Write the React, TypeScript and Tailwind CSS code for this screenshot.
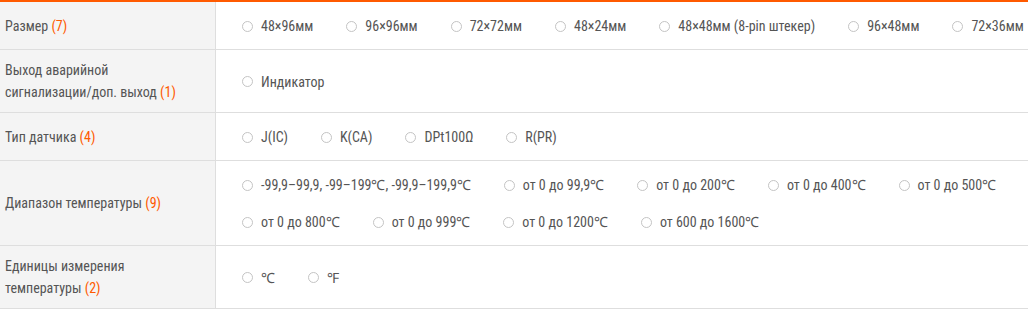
import { useState } from "react";
import type { ReactNode } from "react";

type Row = {
  label: ReactNode;
  count: number;
  options: string[];
};

const rows: Row[] = [
  {
    label: "Размер",
    count: 7,
    options: [
      "48×96мм",
      "96×96мм",
      "72×72мм",
      "48×24мм",
      "48×48мм (8-pin штекер)",
      "96×48мм",
      "72×36мм",
    ],
  },
  {
    label: (
      <>
        Выход аварийной
        <br />
        сигнализации/доп. выход
      </>
    ),
    count: 1,
    options: ["Индикатор"],
  },
  {
    label: "Тип датчика",
    count: 4,
    options: ["J(IC)", "K(CA)", "DPt100Ω", "R(PR)"],
  },
  {
    label: "Диапазон температуры",
    count: 9,
    options: [
      "-99,9–99,9, -99–199℃, -99,9–199,9℃",
      "от 0 до 99,9℃",
      "от 0 до 200℃",
      "от 0 до 400℃",
      "от 0 до 500℃",
      "от 0 до 800℃",
      "от 0 до 999℃",
      "от 0 до 1200℃",
      "от 600 до 1600℃",
    ],
  },
  {
    label: (
      <>
        Единицы измерения
        <br />
        температуры
      </>
    ),
    count: 2,
    options: ["℃", "℉"],
  },
];

function Option({ text, checked, onClick }: { text: string; checked: boolean; onClick: () => void }) {
  return (
    <label className="flex items-center cursor-pointer whitespace-nowrap" onClick={onClick}>
      <span className="w-[11px] h-[11px] rounded-full border border-[#c4c4c4] bg-white flex items-center justify-center">
        {checked ? <span className="w-[5px] h-[5px] rounded-full bg-[#ff5a00]" /> : null}
      </span>
      <span className="ml-[8px]">{text}</span>
    </label>
  );
}

export default function App() {
  const [selected, setSelected] = useState<Record<number, number>>({});

  return (
    <div className="w-[1028px] bg-white border-t-2 border-[#ff5a00] text-[14px] leading-[22px] text-[#555] font-['Roboto_Condensed',Roboto,sans-serif] font-stretch-condensed">
      {rows.map((row, i) => (
        <div key={i} className="flex border-b border-[#dedede]">
          <div className="w-[216px] shrink-0 bg-[#f4f4f4] border-r border-[#dedede] flex items-center pl-[5px] pr-2 py-[9px]">
            <div>
              {row.label} <span className="text-[#ff5a00]">({row.count})</span>
            </div>
          </div>
          <div className="flex-1 flex items-center pl-[26px] pt-[13px] pb-[12px]">
            <div className="flex flex-wrap gap-x-[33px] gap-y-[15px]">
              {row.options.map((opt, j) => (
                <Option
                  key={j}
                  text={opt}
                  checked={selected[i] === j}
                  onClick={() => setSelected({ ...selected, [i]: j })}
                />
              ))}
            </div>
          </div>
        </div>
      ))}
    </div>
  );
}
